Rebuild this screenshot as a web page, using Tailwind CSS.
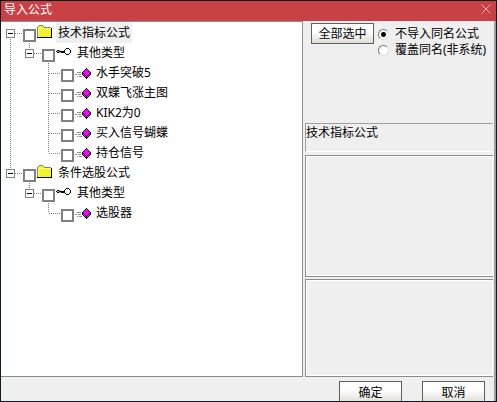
<!DOCTYPE html>
<html lang="zh-CN">
<head>
  <meta charset="UTF-8">
  <meta name="viewport" content="width=device-width, initial-scale=1.0">
  <title>导入公式</title>
  <script src="https://cdn.jsdelivr.net/npm/@tailwindcss/browser@4"></script>
</head>
<body class="h-screen flex flex-col overflow-hidden border border-[#101c1c] bg-[#efefef] text-black text-[12px] leading-[15px] font-['Noto_Sans','Noto_Sans_CJK_SC',sans-serif]">
  <svg class="absolute w-0 h-0">
    <pattern id="dither" width="2" height="2" patternUnits="userSpaceOnUse">
      <path d="M0 0h2v2H0z" fill="#ff0"/>
      <path d="M0 0h1v1H0zM1 1h1v1H1z" fill="#e6e650"/>
    </pattern>
    <symbol id="folder" viewBox="0 0 16 16" shape-rendering="crispEdges">
      <path d="M2 1h4v1h1v1h7v9H1V2h1z" fill="#f6f624"/>
      <path d="M2 4h12v8H2z" fill="url(#dither)"/>
      <path d="M2 0h4v1H2zM1 1h1v1H1zM6 1h1v1H6zM7 2h7v1H7zM0 2h1v10H0zM14 3h1v9h-1z" fill="#808080"/>
      <path d="M1 3h1v9H1zM2 3h12v1H2z" fill="#ffff70"/>
      <path d="M0 12h15v1H0zM14 3h1v10h-1z" fill="#000"/>
    </symbol>
    <symbol id="key" viewBox="0 0 16 16" shape-rendering="crispEdges">
      <path d="M1 5h2v1H1zM0 6h1v1H0zM3 6h5v1H3zM1 7h2v1H1zM5 7h3v1H5z" fill="#000"/>
      <path d="M1 6h2v1H1zM3 5h2v1H3zM3 7h2v1H3z" fill="#aaa"/>
      <path d="M10 3h3v1h-3zM9 4h1v1H9zM13 4h1v1h-1zM8 5h1v3H8zM14 5h1v3h-1zM9 8h1v1H9zM13 8h1v1h-1zM10 9h3v1h-3z" fill="#000"/>
    </symbol>
    <symbol id="gem" viewBox="0 0 16 16" shape-rendering="crispEdges">
      <path d="M2 7h4v1H2zM0 9h2v1H0zM3 9h3v1H3zM2 11h1v1H2zM4 11h3v1H4z" fill="#909090"/>
      <path d="M11 4h1v1h1v1h1v1h1v3h-1v1h-1v1h-1v1h-1v-1h-1v-1H9v-1H8V7h1V6h1V5h1z" fill="#f0f"/>
      <path d="M11 3h1v1h-1zM10 4h1v1h-1zM12 4h1v1h-1zM9 5h1v1H9zM13 5h1v1h-1zM8 6h1v1H8zM14 6h1v1h-1zM7 7h1v3H7zM15 7h1v3h-1zM8 10h1v1H8zM14 10h1v1h-1zM9 11h1v1H9zM13 11h1v1h-1zM10 12h1v1h-1zM12 12h1v1h-1zM11 13h1v1h-1z" fill="#000"/>
      <path d="M8 8h1v1H8zM9 9h1v1H9zM10 10h1v1h-1zM14 8h1v1h-1zM13 9h1v1h-1zM12 10h1v1h-1zM11 11h1v2h-1z" fill="#300030"/>
    </symbol>
  </svg>

  <header class="h-5 shrink-0 flex items-start justify-between bg-[#c94045] pl-[3px] pr-[5px] text-white">
    <h1 class="pt-[1px]">导入公式</h1>
    <button type="button" aria-label="关闭" class="mt-[3px]">
      <svg class="w-[10px] h-[10px]" viewBox="0 0 10 10"><path d="M.5.5l9 9M9.5.5l-9 9" stroke="#e9b4b6" fill="none"/></svg>
    </button>
  </header>

  <main class="flex-1 min-h-0 flex">
    <ul id="tree" class="flex-1 bg-white border-t border-r border-b border-[#8c8c8c] pt-px overflow-hidden"></ul>

    <aside class="w-[191px] flex flex-col pl-[2px] pr-px">
      <div class="h-[102px] shrink-0 flex items-start pl-[6px] pt-[2px]">
        <button type="button" id="all" class="w-[63px] h-[21px] border border-[#5f5f5f] bg-linear-to-b from-white from-40% to-[#e0ddd6]">全部选中</button>
        <div class="pl-1 pt-[3px] leading-4">
          <label class="flex items-center gap-[6px] whitespace-nowrap"><input type="radio" name="mode" checked class="appearance-none w-[11px] h-[11px] rounded-full border border-t-[#777] border-l-[#777] border-b-[#ddd] border-r-[#ddd] bg-white checked:bg-[radial-gradient(circle,#000_2px,#fff_3px)]">不导入同名公式</label>
          <label class="flex items-center gap-[6px] whitespace-nowrap"><input type="radio" name="mode" class="appearance-none w-[11px] h-[11px] rounded-full border border-t-[#777] border-l-[#777] border-b-[#ddd] border-r-[#ddd] bg-white checked:bg-[radial-gradient(circle,#000_2px,#fff_3px)]">覆盖同名(非系统)</label>
        </div>
      </div>
      <p id="current" class="h-[29px] shrink-0 border-t border-l border-t-[#a0a0a0] border-l-[#a0a0a0] border-b border-b-white pt-[1px]">技术指标公式</p>
      <div class="h-[122px] shrink-0 mt-[3px] border-t border-l border-b border-[#8c8c8c] flex"><div class="flex-1 border border-white"></div></div>
      <div class="flex-1 mt-[2px] border-t border-l border-b border-[#8c8c8c] flex"><div class="flex-1 border border-white"></div></div>
    </aside>
    <div class="w-[2px] bg-[#a0a0a0]"></div>
  </main>

  <footer class="h-6 shrink-0 flex">
    <div class="flex-1 flex justify-end gap-5 pt-1 pr-[9px]">
      <button type="button" class="w-[63px] h-[22px] border border-[#5f5f5f] bg-linear-to-b from-white from-40% to-[#e0ddd6]">确定</button>
      <button type="button" class="w-[63px] h-[22px] border border-[#5f5f5f] bg-linear-to-b from-white from-40% to-[#e0ddd6]">取消</button>
    </div>
    <div class="w-[2px] bg-[#a0a0a0]"></div>
  </footer>

  <script>
    // lines: one path per indent column, the last one runs up to the checkbox
    const FULL = 'M9.5 0v20';
    const TEE = 'M9.5 0v20M10 10.5h12';
    const END = 'M9.5 0v10M10 10.5h12';
    const rows = [
      { icon: 'folder', label: '技术指标公式', lines: ['M9.5 10v10M10 10.5h12'], open: true, selected: true },
      { icon: 'key', label: '其他类型', lines: [FULL, END], open: true },
      { icon: 'gem', label: '水手突破5', lines: [FULL, '', TEE] },
      { icon: 'gem', label: '双蝶飞涨主图', lines: [FULL, '', TEE] },
      { icon: 'gem', label: 'KIK2为0', lines: [FULL, '', TEE] },
      { icon: 'gem', label: '买入信号蝴蝶', lines: [FULL, '', TEE] },
      { icon: 'gem', label: '持仓信号', lines: [FULL, '', END] },
      { icon: 'folder', label: '条件选股公式', lines: [END], open: true },
      { icon: 'key', label: '其他类型', lines: ['', END], open: true },
      { icon: 'gem', label: '选股器', lines: ['', '', END] }
    ];

    const tree = document.getElementById('tree');
    rows.forEach((row, i) => {
      const li = document.createElement('li');
      li.className = 'flex items-center h-5';
      row.lines.forEach((d, n) => {
        const last = n === row.lines.length - 1;
        const svg = `<svg class="${last ? 'w-[22px]' : 'w-[19px]'} h-5 shrink-0" shape-rendering="crispEdges">
          <path d="${d}" fill="none" stroke="#808080" stroke-dasharray="1 1"/>
          ${last && row.open ? '<path d="M5.5 6.5h8v8h-8z" fill="#fff" stroke="#808080"/><path d="M7 10.5h5" stroke="#000"/>' : ''}
        </svg>`;
        li.innerHTML += last && row.open ? `<button type="button" aria-label="折叠">${svg}</button>` : svg;
      });
      li.innerHTML += `
        <input type="checkbox" id="f${i}" class="appearance-none w-[13px] h-[13px] shrink-0 self-end mb-px border-2 border-[#808080] bg-white checked:bg-[#808080]">
        <svg class="w-4 h-4 ml-px mr-[3px] shrink-0"><use href="#${row.icon}"/></svg>
        <label for="f${i}" class="h-5 px-[2px] pt-[2px] whitespace-nowrap ${row.selected ? 'bg-[#efefef]' : ''}">${row.label}</label>`;
      tree.appendChild(li);
    });

    document.getElementById('all').addEventListener('click', () => {
      tree.querySelectorAll('input').forEach(box => box.checked = true);
    });
  </script>
</body>
</html>
